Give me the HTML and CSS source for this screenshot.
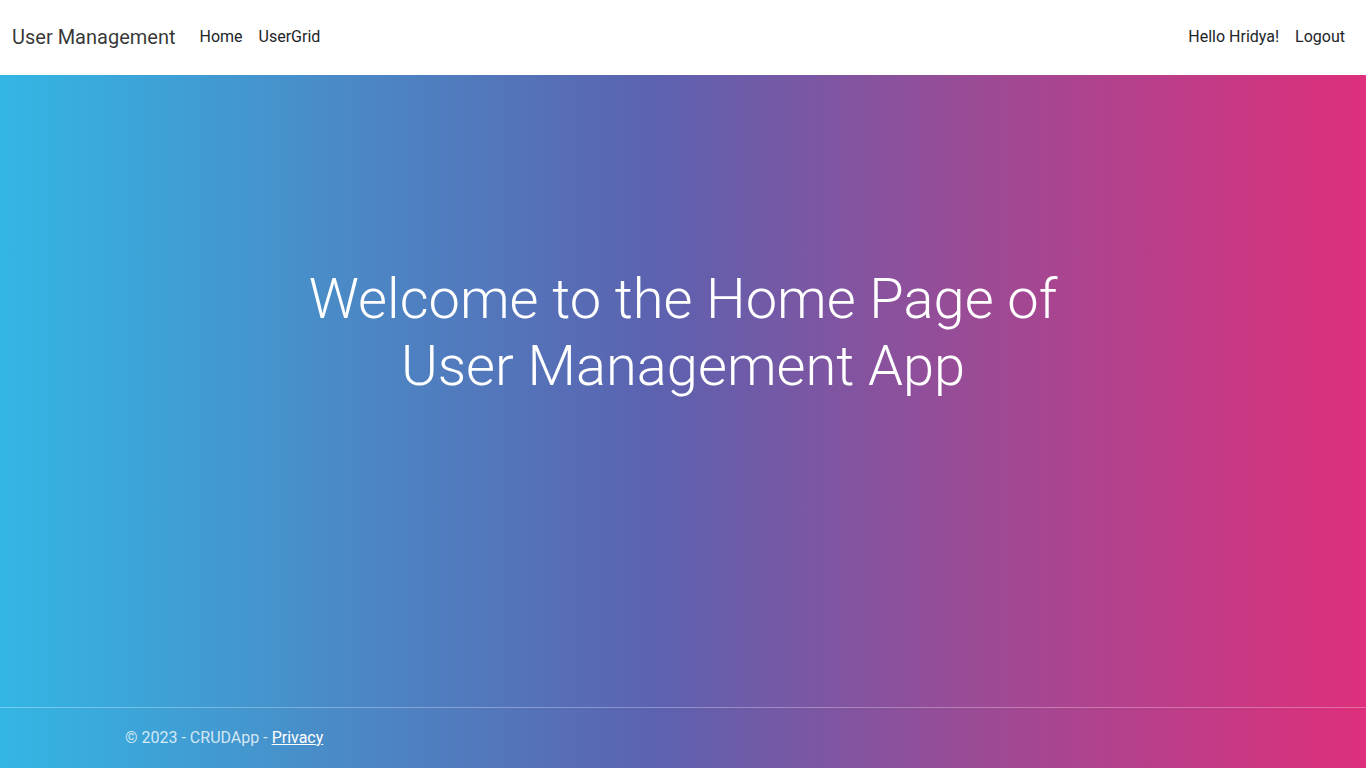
FILE: index.html
```html
<!DOCTYPE html>
<html lang="en">
<head>
<meta charset="utf-8">
<title>Home Page - User Management</title>
<link rel="stylesheet" href="styles.css">
</head>
<body>
<header class="navbar">
  <div class="nav-left">
    <a class="brand" href="#">User Management</a>
    <nav class="nav-links">
      <a class="nav-link" href="#">Home</a>
      <a class="nav-link" href="#">UserGrid</a>
    </nav>
  </div>
  <nav class="nav-links">
    <a class="nav-link" href="#">Hello Hridya!</a>
    <a class="nav-link" href="#">Logout</a>
  </nav>
</header>
<div class="page">
  <main class="main">
    <h1 class="hero-title">Welcome to the Home Page of<br>User Management App</h1>
  </main>
  <footer class="footer">
    <div class="footer-inner">&copy; 2023 - CRUDApp - <a class="footer-link" href="#">Privacy</a></div>
  </footer>
</div>
</body>
</html>
```
FILE: styles.css
```css
* { box-sizing: border-box; }
html, body { margin: 0; padding: 0; }
body {
  font-family: Roboto, "Liberation Sans", Arial, sans-serif;
  font-size: 16px;
  color: #212529;
  min-height: 100vh;
  display: flex;
  flex-direction: column;
  background: #fff;
}
a { text-decoration: none; color: inherit; }
.navbar {
  height: 75px;
  flex: 0 0 75px;
  display: flex;
  align-items: center;
  justify-content: space-between;
  padding: 0 13px 2px 12px;
  background: #fff;
}
.nav-left { display: flex; align-items: center; }
.brand {
  font-size: 20px;
  color: rgba(0,0,0,0.8);
  margin-right: 16px;
  line-height: 30px;
}
.nav-links { display: flex; align-items: center; }
.nav-link {
  padding: 8px;
  font-size: 16px;
  line-height: 24px;
  color: #212529;
}
.page {
  flex: 1;
  display: flex;
  flex-direction: column;
  background: linear-gradient(to right, #33b6e4 0%, #4b88c5 26%, #5c62b0 48%, #9a4b96 71%, #de2f7b 100%);
}
.main {
  flex: 1;
  padding-top: 191px;
  text-align: center;
}
.hero-title {
  margin: 0;
  font-size: 56px;
  font-weight: 300;
  line-height: 1.2;
  color: #fff;
}
.footer {
  border-top: 1px solid rgba(255,255,255,0.3);
  height: 61px;
  line-height: 60px;
}
.footer-inner {
  width: 1140px;
  margin: 0 auto;
  padding: 0 12px;
  color: rgba(255,255,255,0.78);
}
.footer-link {
  color: #fff;
  text-decoration: underline;
}
```
